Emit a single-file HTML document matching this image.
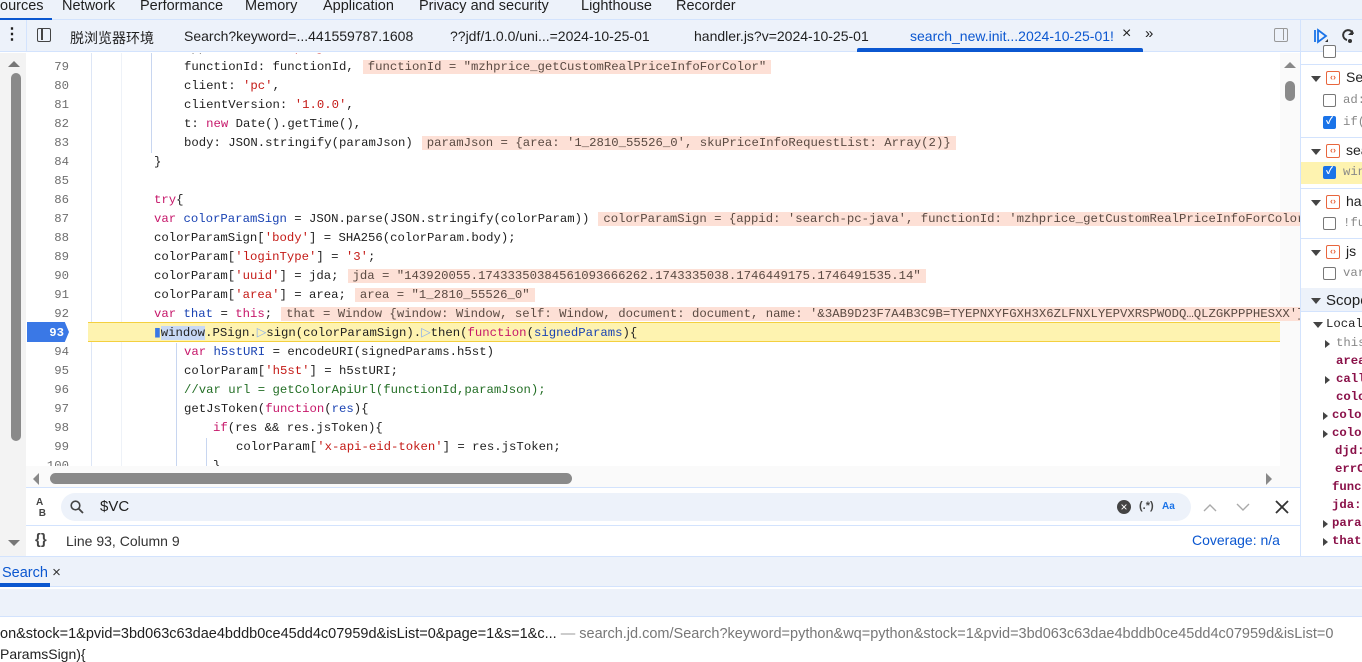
<!DOCTYPE html>
<html><head><meta charset="utf-8"><style>
*{margin:0;padding:0;box-sizing:border-box}
body{width:1362px;height:655px;overflow:hidden;background:#fff;font-family:"Liberation Sans","Noto Sans CJK SC",sans-serif;position:relative;color:#1f1f1f}
.abs{position:absolute;white-space:pre}
.top{position:absolute;left:0;top:0;width:1362px;height:20px;background:#edf2fa;border-bottom:1px solid #d3e3fd}
.top span{position:absolute;top:-2px;font-size:14.5px;color:#1f1f1f}
.bar2{position:absolute;left:0;top:20px;width:1300px;height:32px;background:#edf2fa;border-bottom:1px solid #d3e3fd}
.bar2 span{position:absolute;top:8px;font-size:14px;color:#1f1f1f}
.code{position:absolute;left:0;top:53px;width:1300px;height:413px;overflow:hidden;background:#fff}
.ln{position:absolute;left:27px;width:42px;text-align:right;font:12.3px "Liberation Mono",monospace;color:#6e6e6e;height:19px;line-height:19px}
.cl{position:absolute;left:154px;font:12.3px "Liberation Mono",monospace;color:#1f1f1f;height:19px;line-height:19px;white-space:pre}
.k{color:#c6176a}.s{color:#c41a16}.d{color:#1a43b3}.c{color:#236e25}
.iv{background:#fde0d6;color:#5a4a42;padding:0 5px;margin-left:9px}
.right{position:absolute;left:1300px;top:20px;width:62px;height:536px;background:#fff;border-left:1px solid #d3e3fd;overflow:hidden}
.rr{position:absolute;left:0;width:62px;font-size:14px;white-space:pre}
.cb{position:absolute;width:13px;height:13px;border:1.5px solid #777;border-radius:2px;background:#fff;color:#fff;font-size:10px;line-height:10px;text-align:center;font-weight:bold}
.cbon{background:#1a73e8;border-color:#1a73e8}
.oi{position:absolute;width:14px;height:14px;border:1.5px solid #e8663d;border-radius:2px;color:#e8663d;font-size:9px;line-height:11px;text-align:center;font-weight:bold}
.tri{position:absolute;width:0;height:0;border-left:5px solid transparent;border-right:5px solid transparent;border-top:6px solid #444}
.trr{position:absolute;width:0;height:0;border-top:4px solid transparent;border-bottom:4px solid transparent;border-left:5px solid #444}
.mono{font-family:"Liberation Mono",monospace;font-size:12.3px}
</style></head><body>
<div class="top">
<span style="left:0">ources</span><span style="left:62px">Network</span><span style="left:140px">Performance</span><span style="left:245px">Memory</span><span style="left:323px">Application</span><span style="left:419px">Privacy and security</span><span style="left:581px">Lighthouse</span><span style="left:676px">Recorder</span>
<div style="position:absolute;left:0;top:18px;width:52px;height:3px;background:#0b57d0"></div>
</div>
<div class="bar2">
<span style="left:4px;top:4px;font-size:16px;font-weight:bold">⋮</span>
<div style="position:absolute;left:26px;top:0;width:1px;height:32px;background:#d3e3fd"></div>
<div style="position:absolute;left:37px;top:8px;width:14px;height:14px;border:1.5px solid #444;border-radius:2px"><div style="position:absolute;left:3px;top:0;width:1.5px;height:11px;background:#444"></div></div>
<span style="left:70px">脱浏览器环境</span>
<span style="left:184px">Search?keyword=...441559787.1608</span>
<span style="left:450px">??jdf/1.0.0/uni...=2024-10-25-01</span>
<span style="left:694px">handler.js?v=2024-10-25-01</span>
<span style="left:910px;color:#0b57d0">search_new.init...2024-10-25-01!</span>
<span style="left:1122px;font-size:16px;top:5px">×</span>
<span style="left:1145px;font-size:15px;top:5px">»</span>
<div style="position:absolute;left:857px;top:28px;width:286px;height:4px;background:#0b57d0;border-radius:2px 2px 0 0"></div>
<div style="position:absolute;left:1274px;top:8px;width:14px;height:14px;border:1.5px solid #999;border-radius:2px"><div style="position:absolute;right:3px;top:0;width:1.5px;height:11px;background:#999"></div></div>
</div>
<div class="code">
<div style="position:absolute;left:0;top:0;width:26px;height:413px;background:#f3f3f3"></div>
<div style="position:absolute;left:8px;top:8px;border-left:6px solid transparent;border-right:6px solid transparent;border-bottom:6px solid #777"></div>
<div style="position:absolute;left:11px;top:20px;width:10px;height:368px;background:#8a8a8a;border-radius:5px"></div>
<div style="position:absolute;left:91px;top:0;width:1px;height:413px;background:#dde6f6"></div>
<div style="position:absolute;left:121px;top:0;width:1px;height:413px;background:#eef2f8"></div>
<div style="position:absolute;left:151px;top:0;width:1px;height:100px;background:#c8d6f0"></div>
<div style="position:absolute;left:176px;top:290px;width:1px;height:130px;background:#c8d6f0"></div>
<div style="position:absolute;left:206px;top:385px;width:1px;height:40px;background:#c8d6f0"></div>
<div style="position:absolute;left:88px;top:269px;width:1192px;height:20px;background:#fef3b0;border-top:1px solid #f4d03f;border-bottom:1px solid #f4d03f"></div>
<div style="position:absolute;left:27px;top:269px;width:42px;height:20px;background:#3a78e6;clip-path:polygon(0 0,90% 0,100% 50%,90% 100%,0 100%)"></div>
<div style="position:absolute;left:1280px;top:0;width:20px;height:413px;background:#fafafa"></div>
<div style="position:absolute;left:1284px;top:9px;border-left:6px solid transparent;border-right:6px solid transparent;border-bottom:6px solid #888"></div>
<div style="position:absolute;left:1285px;top:28px;width:10px;height:20px;background:#8a8a8a;border-radius:5px"></div>
<div id="lines"></div>
</div>
<script>
var L=[
[78,'appid: <span class=s>\'search-pc-java\'</span>,',30],
[79,'functionId: functionId,<span class=iv>functionId = "mzhprice_getCustomRealPriceInfoForColor"</span>',30],
[80,"client: <span class=s>'pc'</span>,",30],
[81,"clientVersion: <span class=s>'1.0.0'</span>,",30],
[82,"t: <span class=k>new</span> Date().getTime(),",30],
[83,'body: JSON.stringify(paramJson)<span class=iv>paramJson = {area: \'1_2810_55526_0\', skuPriceInfoRequestList: Array(2)}</span>',30],
[84,"}",0],[85,"",0],
[86,"<span class=k>try</span>{",0],
[87,'<span class=k>var</span> <span class=d>colorParamSign</span> = JSON.parse(JSON.stringify(colorParam))<span class=iv>colorParamSign = {appid: \'search-pc-java\', functionId: \'mzhprice_getCustomRealPriceInfoForColor\'}</span>',0],
[88,"colorParamSign[<span class=s>'body'</span>] = SHA256(colorParam.body);",0],
[89,"colorParam[<span class=s>'loginType'</span>] = <span class=s>'3'</span>;",0],
[90,'colorParam[<span class=s>\'uuid\'</span>] = jda;<span class=iv>jda = "143920055.17433350384561093666262.1743335038.1746449175.1746491535.14"</span>',0],
[91,'colorParam[<span class=s>\'area\'</span>] = area;<span class=iv>area = "1_2810_55526_0"</span>',0],
[92,'<span class=k>var</span> <span class=d>that</span> = <span class=k>this</span>;<span class=iv>that = Window {window: Window, self: Window, document: document, name: \'&amp;3AB9D23F7A4B3C9B=TYEPNXYFGXH3X6ZLFNXLYEPVXRSPWODQ…QLZGKPPPHESXX\'}</span>',0],
[93,'<span style="color:#3a78e6">&#9646;</span><span style="background:#c7d8f5">window</span>.PSign.<span style="color:#8ab0f0">&#9655;</span>sign(colorParamSign).<span style="color:#8ab0f0">&#9655;</span>then(<span class=k>function</span>(<span class=d>signedParams</span>){',0],
[94,'<span class=k>var</span> <span class=d>h5stURI</span> = encodeURI(signedParams.h5st)',30],
[95,"colorParam[<span class=s>'h5st'</span>] = h5stURI;",30],
[96,"<span class=c>//var url = getColorApiUrl(functionId,paramJson);</span>",30],
[97,"getJsToken(<span class=k>function</span>(<span class=d>res</span>){",30],
[98,"<span class=k>if</span>(res &amp;&amp; res.jsToken){",59],
[99,"colorParam[<span class=s>'x-api-eid-token'</span>] = res.jsToken;",82],
[100,"}",59]];
var h='';
L.forEach(function(l){var t=5+(l[0]-79)*19;
h+='<div class="ln" style="top:'+t+'px;'+(l[0]==93?'color:#fff;font-weight:bold;left:22px':'')+'">'+l[0]+'</div>';
h+='<div class="cl" style="top:'+t+'px;left:'+(154+l[2])+'px">'+l[1]+'</div>';});
document.getElementById('lines').innerHTML=h;
</script>
<div style="position:absolute;left:26px;top:466px;width:1274px;height:22px;background:#fafafa;border-bottom:1px solid #d3e3fd"></div>
<div style="position:absolute;left:33px;top:473px;border-top:6px solid transparent;border-bottom:6px solid transparent;border-right:6px solid #888"></div>
<div style="position:absolute;left:50px;top:473px;width:522px;height:11px;background:#8a8a8a;border-radius:6px"></div>
<div style="position:absolute;left:1266px;top:473px;border-top:6px solid transparent;border-bottom:6px solid transparent;border-left:6px solid #888"></div>
<div style="position:absolute;left:0;top:466px;width:26px;height:90px;background:#f3f3f3"></div>
<div style="position:absolute;left:8px;top:540px;border-left:6px solid transparent;border-right:6px solid transparent;border-top:6px solid #777"></div>
<div class="abs" style="left:36px;top:497px;font-size:10px;font-weight:bold;color:#444">A<br> B</div>
<div style="position:absolute;left:61px;top:493px;width:1130px;height:28px;background:#edf2fa;border-radius:14px"></div>
<svg style="position:absolute;left:70px;top:500px" width="14" height="14"><circle cx="5.5" cy="5.5" r="4.3" fill="none" stroke="#444" stroke-width="1.6"/><line x1="8.6" y1="8.6" x2="13" y2="13" stroke="#444" stroke-width="1.8"/></svg>
<div class="abs" style="left:100px;top:498px;font-size:15px">$VC</div>
<div style="position:absolute;left:1117px;top:500px;width:14px;height:14px;border-radius:50%;background:#444;color:#fff;font-size:12px;line-height:14px;text-align:center">×</div>
<div class="abs" style="left:1139px;top:500px;font-size:11px;font-weight:bold;color:#444">(.*)</div>
<div class="abs" style="left:1162px;top:501px;font-size:10px;font-weight:bold;color:#1a73e8">Aa</div>
<svg style="position:absolute;left:1203px;top:501px" width="60" height="12"><polyline points="1,10 7,4 13,10" fill="none" stroke="#aaa" stroke-width="1.4"/><polyline points="34,3 40,9 46,3" fill="none" stroke="#aaa" stroke-width="1.4"/></svg>
<svg style="position:absolute;left:1275px;top:500px" width="14" height="14"><path d="M1 1L13 13M13 1L1 13" stroke="#333" stroke-width="1.8"/></svg>
<div style="position:absolute;left:26px;top:525px;width:1274px;height:1px;background:#d3e3fd"></div>
<div class="abs" style="left:35px;top:531px;font-size:15px;font-weight:bold;color:#444">{}</div>
<div class="abs" style="left:66px;top:533px;font-size:14px;color:#333">Line 93, Column 9</div>
<div class="abs" style="left:1192px;top:532px;font-size:14px;color:#0b57d0">Coverage: n/a</div>
<div class="right">
<div style="position:absolute;left:0;top:0;width:62px;height:32px;background:#edf2fa;border-bottom:1px solid #d3e3fd"></div>
<svg style="position:absolute;left:12px;top:8px" width="50" height="18"><path d="M2 2v12M5 2l8 6-8 6z" fill="none" stroke="#1a73e8" stroke-width="1.8"/><path d="M12 14l3-3v3z" fill="#333"/><path d="M34 12a5 5 0 1 1 6-6" fill="none" stroke="#333" stroke-width="2"/><path d="M40 2v5h-5" fill="#333"/><circle cx="37" cy="13" r="2" fill="#333"/></svg>
<div class="cb" style="left:22px;top:25px"></div>
<div style="position:absolute;left:0;top:44px;width:62px;height:1px;background:#d3e3fd"></div>
<div class="tri" style="left:10px;top:56px"></div><div class="oi" style="left:25px;top:51px">‹›</div><div class="rr" style="left:45px;top:49px">Se</div>
<div class="cb" style="left:22px;top:74px"></div><div class="rr mono" style="left:42px;top:73px;color:#888">ad:</div>
<div class="cb cbon" style="left:22px;top:96px">✓</div><div class="rr mono" style="left:42px;top:95px;color:#888">if(</div>
<div style="position:absolute;left:0;top:117px;width:62px;height:1px;background:#d3e3fd"></div>
<div class="tri" style="left:10px;top:129px"></div><div class="oi" style="left:25px;top:124px">‹›</div><div class="rr" style="left:45px;top:122px">sea</div>
<div style="position:absolute;left:0;top:142px;width:62px;height:22px;background:#fef3b0"></div>
<div class="cb cbon" style="left:22px;top:146px">✓</div><div class="rr mono" style="left:42px;top:145px;color:#888">win</div>
<div style="position:absolute;left:0;top:168px;width:62px;height:1px;background:#d3e3fd"></div>
<div class="tri" style="left:10px;top:180px"></div><div class="oi" style="left:25px;top:175px">‹›</div><div class="rr" style="left:45px;top:173px">ha</div>
<div class="cb" style="left:22px;top:197px"></div><div class="rr mono" style="left:42px;top:196px;color:#888">!fu</div>
<div style="position:absolute;left:0;top:218px;width:62px;height:1px;background:#d3e3fd"></div>
<div class="tri" style="left:10px;top:230px"></div><div class="oi" style="left:25px;top:225px">‹›</div><div class="rr" style="left:45px;top:223px">js</div>
<div class="cb" style="left:22px;top:247px"></div><div class="rr mono" style="left:42px;top:246px;color:#888">var</div>
<div style="position:absolute;left:0;top:268px;width:62px;height:24px;background:#edf2fa;border-bottom:1px solid #d3e3fd"></div>
<div class="tri" style="left:10px;top:278px"></div><div class="rr" style="left:25px;top:272px;font-size:15px">Scope</div>
<div class="tri" style="left:12px;top:302px"></div><div class="rr mono" style="left:25px;top:297px">Local</div>
<div class="trr" style="left:24px;top:320px"></div><div class="rr mono" style="left:35px;top:316px;color:#888">this</div>
<div class="rr mono" style="left:35px;top:334px;color:#8a1149;font-weight:bold">area</div>
<div class="trr" style="left:24px;top:356px"></div><div class="rr mono" style="left:35px;top:352px;color:#8a1149;font-weight:bold">call</div>
<div class="rr mono" style="left:35px;top:370px;color:#8a1149;font-weight:bold">colo</div>
<div class="trr" style="left:22px;top:392px"></div><div class="rr mono" style="left:31px;top:388px;color:#8a1149;font-weight:bold">colo</div>
<div class="trr" style="left:22px;top:410px"></div><div class="rr mono" style="left:31px;top:406px;color:#8a1149;font-weight:bold">colo</div>
<div class="rr mono" style="left:34px;top:424px;color:#8a1149;font-weight:bold">djd:</div>
<div class="rr mono" style="left:34px;top:442px;color:#8a1149;font-weight:bold">errC</div>
<div class="rr mono" style="left:31px;top:460px;color:#8a1149;font-weight:bold">func</div>
<div class="rr mono" style="left:31px;top:478px;color:#8a1149;font-weight:bold">jda:</div>
<div class="trr" style="left:22px;top:500px"></div><div class="rr mono" style="left:31px;top:496px;color:#8a1149;font-weight:bold">para</div>
<div class="trr" style="left:22px;top:518px"></div><div class="rr mono" style="left:31px;top:514px;color:#8a1149;font-weight:bold">that</div>
</div>
<div style="position:absolute;left:0;top:556px;width:1362px;height:31px;background:#edf2fa;border-top:1px solid #d3e3fd;border-bottom:1px solid #d3e3fd"></div>
<div class="abs" style="left:2px;top:564px;font-size:14.5px;color:#0b57d0">Search<span style="color:#333;font-size:15px"> ×</span></div>
<div style="position:absolute;left:0;top:583px;width:50px;height:4px;background:#0b57d0"></div>
<div style="position:absolute;left:0;top:589px;width:1362px;height:28px;background:#edf2fa;border-bottom:1px solid #d3e3fd"></div>
<div class="abs" style="left:0;top:626px;font-size:14.5px;color:#1f1f1f">on&amp;stock=1&amp;pvid=3bd063c63dae4bddb0ce45dd4c07959d&amp;isList=0&amp;page=1&amp;s=1&amp;c... <span style="color:#999">—</span> <span style="color:#777">search.jd.com/Search?keyword=python&amp;wq=python&amp;stock=1&amp;pvid=3bd063c63dae4bddb0ce45dd4c07959d&amp;isList=0</span></div>
<div class="abs" style="left:0;top:646px;font-size:14px">ParamsSign){</div>
</body></html>
